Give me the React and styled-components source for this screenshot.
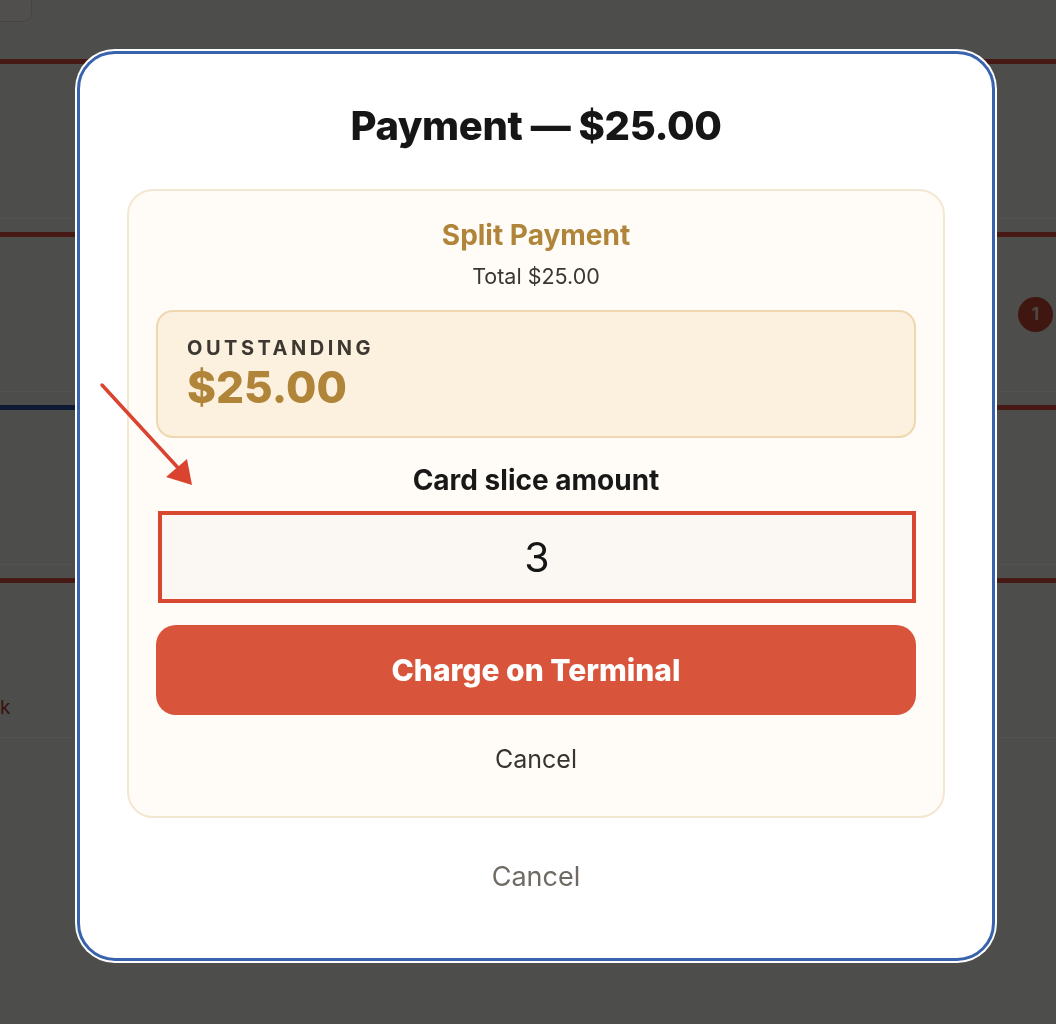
import React from "react";
import styled, { createGlobalStyle } from "styled-components";

const GlobalStyle = createGlobalStyle`
  html, body {
    margin: 0;
    padding: 0;
    background: #eeece8;
    font-family: Inter, "Noto Sans", "Liberation Sans", sans-serif;
  }
  * { box-sizing: border-box; }
`;

// ---- page underneath the dialog ----

const Page = styled.div`
  width: 1056px;
  height: 1024px;
  overflow: hidden;
  background: #f0eeea;
`;

const Header = styled.div`
  height: 59px;
  display: flex;
  align-items: flex-start;
`;

const TopButton = styled.div`
  margin-left: -40px;
  margin-top: -20px;
  width: 72px;
  height: 42px;
  border: 1px solid #d8d4cc;
  border-radius: 9px;
  background: #f7f5f1;
`;

const Rows = styled.div`
  display: flex;
  flex-direction: column;
  gap: 13px;
`;

const Row = styled.div`
  display: grid;
  grid-template-columns: 1fr 1fr;
  height: 160px;
`;

const Tile = styled.div`
  border-top: 5px solid ${(p) => (p.$accent === "blue" ? "#2c4f9e" : "#d9503e")};
  border-bottom: 1px solid #ffffff;
  display: flex;
  align-items: ${(p) => (p.$end ? "flex-end" : "center")};
  justify-content: ${(p) => (p.$right ? "flex-end" : "flex-start")};
  padding: 0 0 18px 0;
  color: #b23a2a;
  font-size: 19px;
`;

const Badge = styled.div`
  width: 35px;
  height: 35px;
  margin-right: 3px;
  margin-top: 18px;
  border-radius: 50%;
  background: #c44a33;
  color: #f7ddd5;
  font-weight: 700;
  font-size: 17px;
  display: flex;
  align-items: center;
  justify-content: center;
`;

// ---- dialog ----

const Overlay = styled.div`
  position: fixed;
  inset: 0;
  background: rgba(0, 0, 0, 0.68);
  display: flex;
  justify-content: center;
  align-items: flex-start;
  padding: 51px 0 0 16px;
`;

const Modal = styled.div`
  position: relative;
  width: 918px;
  height: 910px;
  background: #ffffff;
  border: 3px solid #3a63ad;
  border-radius: 38px;
  box-shadow: 0 0 0 2px #ffffff;
  padding: 49px 47px 0;
  display: flex;
  flex-direction: column;
  align-items: center;
`;

const Title = styled.h1`
  margin: 0 0 40px;
  font-size: 40px;
  line-height: 46px;
  font-weight: 800;
  color: #161616;
  letter-spacing: -0.4px;
`;

const SplitCard = styled.section`
  width: 100%;
  height: 629px;
  background: #fffcf8;
  border: 2px solid #f4e7d1;
  border-radius: 26px;
  padding: 29px 27px 0;
  display: flex;
  flex-direction: column;
  align-items: center;
`;

const SplitTitle = styled.h2`
  margin: 0 0 13px;
  font-size: 28px;
  line-height: 31px;
  font-weight: 700;
  color: #b08439;
`;

const Total = styled.div`
  font-size: 21.5px;
  line-height: 24px;
  color: #3a3733;
  margin-bottom: 22px;
`;

const Outstanding = styled.div`
  width: 100%;
  height: 128px;
  background: #fcf0df;
  border: 2px solid #efd8b1;
  border-radius: 17px;
  padding: 24px 29px 0;
  display: flex;
  flex-direction: column;
  gap: 4px;
`;

const OutLabel = styled.div`
  font-size: 20px;
  line-height: 24px;
  font-weight: 700;
  letter-spacing: 3.5px;
  color: #3c3731;
`;

const OutAmount = styled.div`
  font-size: 44px;
  line-height: 46px;
  font-weight: 800;
  color: #b08439;
`;

const FieldLabel = styled.label`
  margin: 27px 0 15px;
  font-size: 28px;
  line-height: 31px;
  font-weight: 700;
  color: #181818;
`;

const AmountInput = styled.input`
  width: calc(100% - 2px);
  margin-left: 2px;
  height: 92px;
  border: 4px solid #d8472f;
  background: #fbf7f2;
  text-align: center;
  font-family: inherit;
  font-size: 41px;
  color: #151515;
  outline: none;
`;

const ChargeButton = styled.button`
  width: 100%;
  height: 90px;
  margin-top: 22px;
  border: none;
  border-radius: 20px;
  background: #d8543a;
  color: #ffffff;
  font-family: inherit;
  font-size: 30px;
  font-weight: 800;
  cursor: pointer;
`;

const CancelLink = styled.button`
  border: none;
  background: none;
  padding: 0;
  font-family: inherit;
  font-size: ${(p) => (p.$big ? "27px" : "25px")};
  line-height: ${(p) => (p.$big ? "31px" : "29px")};
  color: ${(p) => (p.$muted ? "#6f6a63" : "#383531")};
  margin-top: ${(p) => (p.$big ? "43px" : "30px")};
  cursor: pointer;
`;

const Annotation = styled.svg`
  position: fixed;
  left: 0;
  top: 0;
  pointer-events: none;
`;

export default function App() {
  return (
    <>
      <GlobalStyle />
      <Page>
        <Header>
          <TopButton />
        </Header>
        <Rows>
          <Row>
            <Tile />
            <Tile />
          </Row>
          <Row>
            <Tile />
            <Tile $right>
              <Badge>1</Badge>
            </Tile>
          </Row>
          <Row>
            <Tile $accent="blue" />
            <Tile />
          </Row>
          <Row>
            <Tile $end>k</Tile>
            <Tile />
          </Row>
        </Rows>
      </Page>

      <Overlay>
        <Modal role="dialog" aria-labelledby="payTitle">
          <Title id="payTitle">Payment — $25.00</Title>
          <SplitCard>
            <SplitTitle>Split Payment</SplitTitle>
            <Total>Total $25.00</Total>
            <Outstanding>
              <OutLabel>OUTSTANDING</OutLabel>
              <OutAmount>$25.00</OutAmount>
            </Outstanding>
            <FieldLabel htmlFor="slice">Card slice amount</FieldLabel>
            <AmountInput id="slice" value="3" readOnly />
            <ChargeButton>Charge on Terminal</ChargeButton>
            <CancelLink>Cancel</CancelLink>
          </SplitCard>
          <CancelLink $big $muted>
            Cancel
          </CancelLink>
        </Modal>
      </Overlay>

      <Annotation width="1056" height="1024" viewBox="0 0 1056 1024">
        <line
          x1="102"
          y1="385"
          x2="180"
          y2="470"
          stroke="#d9432f"
          strokeWidth="3.5"
          strokeLinecap="round"
        />
        <polygon points="192,485 166,477 187,459" fill="#d9432f" />
      </Annotation>
    </>
  );
}
